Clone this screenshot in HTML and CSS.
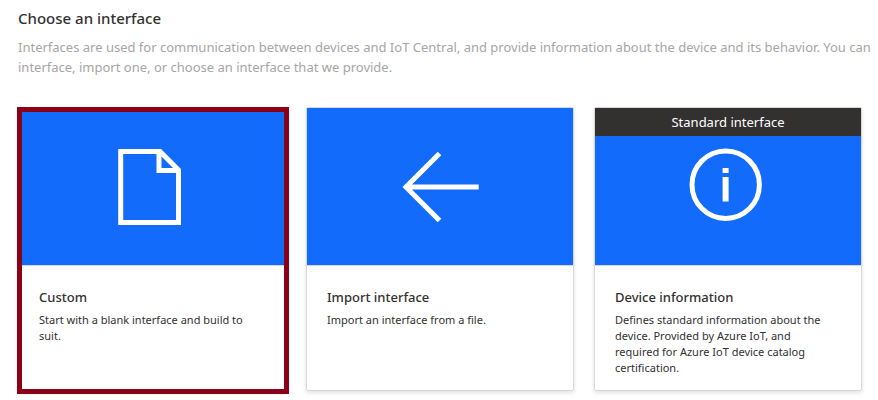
FILE: index.html
```html
<!DOCTYPE html>
<html lang="en">
<head>
<meta charset="utf-8">
<title>Choose an interface</title>
<link rel="stylesheet" href="styles.css">
</head>
<body>
<main class="page">
  <h1 class="title">Choose an interface</h1>
  <p class="intro">Interfaces are used for communication between devices and IoT Central, and provide information about the device and its behavior. You can<br>interface, import one, or choose an interface that we provide.</p>
  <div class="cards">
    <button type="button" class="card card-selected">
      <span class="hero">
        <svg class="icon" viewBox="0 0 268 157" aria-hidden="true">
          <path d="M102.700 43.500H142L160.500 62V114.500H102.700ZM141 43.500V62.500H160.500" fill="none" stroke="#fff" stroke-width="5"/>
        </svg>
      </span>
      <span class="body">
        <span class="name">Custom</span>
        <span class="text">Start with a blank interface and build to suit.</span>
      </span>
    </button>
    <button type="button" class="card">
      <span class="hero">
        <svg class="icon" viewBox="0 0 268 157" aria-hidden="true">
          <path d="M133.500 45.500L100 79L133.500 112.500M101 79H172.700" fill="none" stroke="#fff" stroke-width="5"/>
        </svg>
      </span>
      <span class="body">
        <span class="name">Import interface</span>
        <span class="text">Import an interface from a file.</span>
      </span>
    </button>
    <button type="button" class="card">
      <span class="hero">
        <span class="tag">Standard interface</span>
        <svg class="icon" viewBox="0 0 268 157" aria-hidden="true">
          <circle cx="131.700" cy="76.700" r="33.700" fill="none" stroke="#fff" stroke-width="5"/>
          <path d="M128.600 60h6v5h-6zM128.600 69h6v24.500h-6z" fill="#fff"/>
        </svg>
      </span>
      <span class="body">
        <span class="name">Device information</span>
        <span class="text">Defines standard information about the device. Provided by Azure IoT, and required for Azure IoT device catalog certification.</span>
      </span>
    </button>
  </div>
</main>
</body>
</html>
```
FILE: styles.css
```css
* { box-sizing: border-box; }

body {
  margin: 0;
  background: #fff;
  color: #323130;
  font-family: "Noto Sans", "Open Sans", sans-serif;
  overflow-x: hidden;
}

.page { padding: 8px 16px 8px 18px; }

.title {
  margin: 0 0 9px;
  font-size: 15px;
  line-height: 20px;
  font-weight: 500;
}

.intro {
  margin: 0 0 30px;
  color: #a6a6a6;
  font-size: 13px;
  line-height: 20px;
  white-space: nowrap;
}

.cards {
  display: grid;
  grid-template-columns: repeat(3, minmax(0, 1fr));
  gap: 20px;
}

.card {
  position: relative;
  display: flex;
  flex-direction: column;
  padding: 0;
  border: 1px solid #d8d8d8;
  border-radius: 2px;
  background: #fff;
  box-shadow: 0 2px 4px rgba(0, 0, 0, 0.12);
  color: inherit;
  font: inherit;
  text-align: left;
}

/* Selection frame drawn over the card edge */
.card-selected::after {
  content: "";
  position: absolute;
  inset: -1px -4px -4px -2px;
  border: 5px solid #8a0016;
}

.hero {
  position: relative;
  display: flex;
  justify-content: center;
  width: 100%;
  height: 158px;
  background: #136bfb;
  border-bottom: 1px solid #d8d8d8;
}

.icon {
  flex: none;
  width: 268px;
  height: 157px;
}

.tag {
  position: absolute;
  inset: 0 0 auto;
  background: #323130;
  color: #fff;
  font-size: 13px;
  line-height: 28px;
  text-align: center;
}

.body {
  display: flex;
  flex-direction: column;
  gap: 5px;
  padding: 21px 24px 14px 20px;
}

.name {
  font-size: 13px;
  line-height: 20px;
  font-weight: 500;
}

.text {
  font-size: 11px;
  line-height: 16px;
}
```
